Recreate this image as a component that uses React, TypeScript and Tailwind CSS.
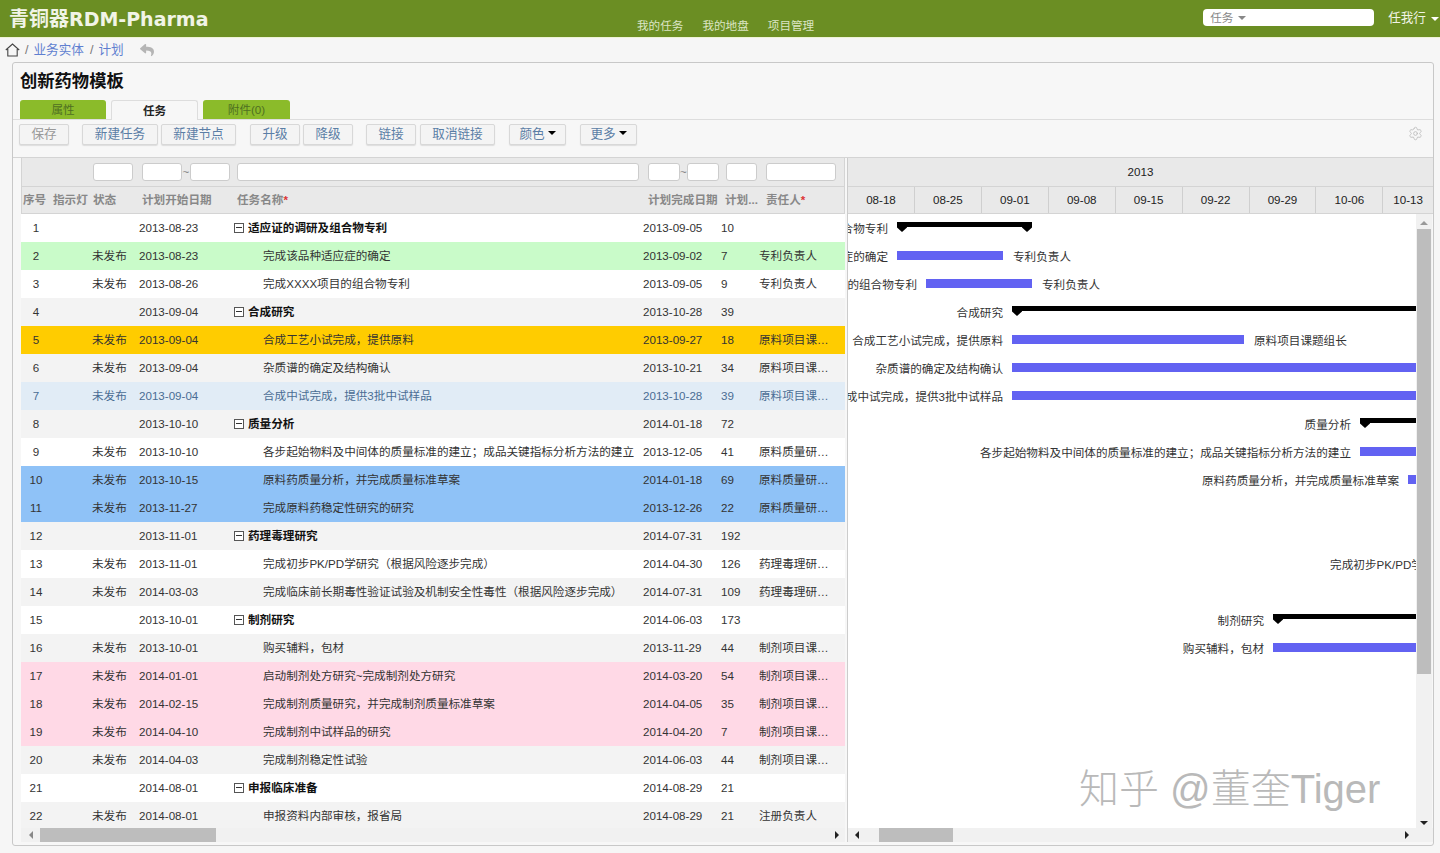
import { ChevronDown, Settings } from "lucide-react";
import { FaReply } from "react-icons/fa";

type Row = {
    no: number;
    status?: string;
    start: string;
    name: string;
    end: string;
    days: number;
    owner?: string;
    group?: boolean;
    bg: string;
    text?: string;
};

const rows: Row[] = [
    { no: 1, start: "2013-08-23", name: "适应证的调研及组合物专利", end: "2013-09-05", days: 10, group: true, bg: "bg-white" },
    { no: 2, status: "未发布", start: "2013-08-23", name: "完成该品种适应症的确定", end: "2013-09-02", days: 7, owner: "专利负责人", bg: "bg-[#c9fbc9]" },
    { no: 3, status: "未发布", start: "2013-08-26", name: "完成XXXX项目的组合物专利", end: "2013-09-05", days: 9, owner: "专利负责人", bg: "bg-white" },
    { no: 4, start: "2013-09-04", name: "合成研究", end: "2013-10-28", days: 39, group: true, bg: "bg-[#f3f3f3]" },
    { no: 5, status: "未发布", start: "2013-09-04", name: "合成工艺小试完成，提供原料", end: "2013-09-27", days: 18, owner: "原料项目课题组长", bg: "bg-[#ffcc00]" },
    { no: 6, status: "未发布", start: "2013-09-04", name: "杂质谱的确定及结构确认", end: "2013-10-21", days: 34, owner: "原料项目课题组长", bg: "bg-[#f3f3f3]" },
    { no: 7, status: "未发布", start: "2013-09-04", name: "合成中试完成，提供3批中试样品", end: "2013-10-28", days: 39, owner: "原料项目课题组长", bg: "bg-[#e1ecf6]", text: "text-[#4a6d94]" },
    { no: 8, start: "2013-10-10", name: "质量分析", end: "2014-01-18", days: 72, group: true, bg: "bg-[#f3f3f3]" },
    { no: 9, status: "未发布", start: "2013-10-10", name: "各步起始物料及中间体的质量标准的建立；成品关键指标分析方法的建立", end: "2013-12-05", days: 41, owner: "原料质量研究员", bg: "bg-white" },
    { no: 10, status: "未发布", start: "2013-10-15", name: "原料药质量分析，并完成质量标准草案", end: "2014-01-18", days: 69, owner: "原料质量研究员", bg: "bg-[#8fc2f7]" },
    { no: 11, status: "未发布", start: "2013-11-27", name: "完成原料药稳定性研究的研究", end: "2013-12-26", days: 22, owner: "原料质量研究员", bg: "bg-[#8fc2f7]" },
    { no: 12, start: "2013-11-01", name: "药理毒理研究", end: "2014-07-31", days: 192, group: true, bg: "bg-[#f3f3f3]" },
    { no: 13, status: "未发布", start: "2013-11-01", name: "完成初步PK/PD学研究（根据风险逐步完成）", end: "2014-04-30", days: 126, owner: "药理毒理研究员", bg: "bg-white" },
    { no: 14, status: "未发布", start: "2014-03-03", name: "完成临床前长期毒性验证试验及机制安全性毒性（根据风险逐步完成）", end: "2014-07-31", days: 109, owner: "药理毒理研究员", bg: "bg-[#f3f3f3]" },
    { no: 15, start: "2013-10-01", name: "制剂研究", end: "2014-06-03", days: 173, group: true, bg: "bg-white" },
    { no: 16, status: "未发布", start: "2013-10-01", name: "购买辅料，包材", end: "2013-11-29", days: 44, owner: "制剂项目课题组长", bg: "bg-[#f3f3f3]" },
    { no: 17, status: "未发布", start: "2014-01-01", name: "启动制剂处方研究~完成制剂处方研究", end: "2014-03-20", days: 54, owner: "制剂项目课题组长", bg: "bg-[#ffd9e6]" },
    { no: 18, status: "未发布", start: "2014-02-15", name: "完成制剂质量研究，并完成制剂质量标准草案", end: "2014-04-05", days: 35, owner: "制剂项目课题组长", bg: "bg-[#ffd9e6]" },
    { no: 19, status: "未发布", start: "2014-04-10", name: "完成制剂中试样品的研究", end: "2014-04-20", days: 7, owner: "制剂项目课题组长", bg: "bg-[#ffd9e6]" },
    { no: 20, status: "未发布", start: "2014-04-03", name: "完成制剂稳定性试验", end: "2014-06-03", days: 44, owner: "制剂项目课题组长", bg: "bg-[#f3f3f3]" },
    { no: 21, start: "2014-08-01", name: "申报临床准备", end: "2014-08-29", days: 21, group: true, bg: "bg-white" },
    { no: 22, status: "未发布", start: "2014-08-01", name: "申报资料内部审核，报省局", end: "2014-08-29", days: 21, owner: "注册负责人", bg: "bg-[#f3f3f3]" },
];

// x = bar start, w = bar width, in px from the left edge of the gantt body
const bars: Record<number, { x: number; w: number; owner?: string }> = {
    1: { x: 49, w: 135 },
    2: { x: 49, w: 106, owner: "专利负责人" },
    3: { x: 78, w: 106, owner: "专利负责人" },
    4: { x: 164, w: 500 },
    5: { x: 164, w: 232, owner: "原料项目课题组长" },
    6: { x: 164, w: 500 },
    7: { x: 164, w: 500 },
    8: { x: 512, w: 300 },
    9: { x: 512, w: 300 },
    10: { x: 560, w: 300 },
    13: { x: 723, w: 300 },
    15: { x: 425, w: 300 },
    16: { x: 425, w: 300 },
};

const weeks = ["08-18", "08-25", "09-01", "09-08", "09-15", "09-22", "09-29", "10-06", "10-13"];

const toolbar = [
    { label: "保存", w: "w-[50px]", ml: "ml-0", muted: true },
    { label: "新建任务", w: "w-[76px]", ml: "ml-[13px]" },
    { label: "新建节点", w: "w-[75px]", ml: "ml-[3px]" },
    { label: "升级", w: "w-[50px]", ml: "ml-[14px]" },
    { label: "降级", w: "w-[50px]", ml: "ml-[3px]" },
    { label: "链接", w: "w-[50px]", ml: "ml-[13px]" },
    { label: "取消链接", w: "w-[75px]", ml: "ml-[4px]" },
    { label: "颜色", w: "w-[57px]", ml: "ml-[14px]", caret: true },
    { label: "更多", w: "w-[57px]", ml: "ml-[14px]", caret: true },
];

function Caret({ className }: { className: string }) {
    return <span className={`inline-block border-x-[4px] border-t-[4px] border-x-transparent ${className}`} />;
}

function FilterInput({ className }: { className: string }) {
    return <div className={`h-[18px] shrink-0 rounded-[3px] border border-[#ccc] bg-white ${className}`} />;
}

function GanttRow({ row }: { row: Row }) {
    const bar = bars[row.no];
    if (!bar) return <div className="h-[28px]" />;
    return (
        <div className="relative h-[28px] overflow-hidden">
            <span
                className="absolute top-[6px] whitespace-nowrap text-[#333]"
                style={{ right: 568 - bar.x + 9 }}
            >
                {row.name}
            </span>
            {row.group ? (
                <div className="absolute top-[8px]" style={{ left: bar.x, width: bar.w }}>
                    <div className="h-[5px] bg-black" />
                    <div className="absolute left-0 top-0 h-[10px] w-[10px] bg-black [clip-path:polygon(0_0,100%_0,100%_55%,50%_100%,0_55%)]" />
                    <div className="absolute right-0 top-0 h-[10px] w-[10px] bg-black [clip-path:polygon(0_0,100%_0,100%_55%,50%_100%,0_55%)]" />
                </div>
            ) : (
                <div className="absolute top-[9px] h-[9px] bg-[#6262f2]" style={{ left: bar.x, width: bar.w }} />
            )}
            {bar.owner && (
                <span className="absolute top-[6px] whitespace-nowrap text-[#333]" style={{ left: bar.x + bar.w + 10 }}>
                    {bar.owner}
                </span>
            )}
        </div>
    );
}

export default function App() {
    return (
        <div className="relative flex h-[853px] w-[1440px] flex-col overflow-hidden bg-[#f6f6f6] font-['Liberation_Sans','Noto_Sans_CJK_SC',sans-serif] text-[11.6px] text-[#333]">
            {/* Top bar */}
            <header className="flex h-[38px] shrink-0 items-start border-b border-[#eef3d6] bg-[#6b8e23] pl-[9px]">
                <div className="mt-[6px] w-[628px] whitespace-nowrap font-['DejaVu_Sans','Noto_Sans_CJK_SC',sans-serif] text-[19px] font-bold leading-[26px] text-[#f1f4e6]">
                    <span className="text-[20px]">青铜器</span>RDM-Pharma
                </div>
                <nav className="mt-[18px] flex gap-[19px] text-[11.6px] leading-[16px] text-[#dbe5c4]">
                    <span>我的任务</span>
                    <span>我的地盘</span>
                    <span>项目管理</span>
                </nav>
                <div className="ml-[389px] mt-[9px] flex h-[17px] w-[171px] items-center gap-[5px] rounded-[4px] bg-white pl-[7px] text-[#888]">
                    任务
                    <Caret className="border-t-[#888]" />
                </div>
                <span className="ml-[14px] mt-[9px] text-[12.6px] leading-[18px] text-[#f1f4e6]">任我行</span>
                <Caret className="ml-[5px] mt-[17px] border-t-white" />
            </header>

            {/* Breadcrumb */}
            <div className="flex h-[24px] shrink-0 items-center pl-[5px] text-[12.6px]">
                <svg width="15" height="14" viewBox="0 0 15 14" fill="none" stroke="#444" strokeWidth="1.1">
                    <path d="M0.8 7 L7.5 1 L14.2 7 M2.8 6 V13 H12.2 V6" />
                </svg>
                <span className="ml-[5px] text-[#777]">/</span>
                <span className="ml-[5px] text-[#5f7fd0]">业务实体</span>
                <span className="ml-[6px] text-[#777]">/</span>
                <span className="ml-[5px] text-[#5f7fd0]">计划</span>
                <FaReply className="ml-[16px] text-[14px] text-[#b5b5b5]" />
            </div>

            {/* Panel */}
            <main className="ml-[12px] flex h-[784px] w-[1422px] flex-col rounded-[3px] border border-[#c8c8c8] bg-[#f7f7f7]">
                <h1 className="ml-[7px] mt-[5px] h-[32px] text-[17.3px] font-bold leading-[26px] text-[#111]">创新药物模板</h1>
                <div className="flex h-[20px] shrink-0 items-end gap-[5px] border-b border-[#ddd] pl-[7px]">
                    <div className="flex h-[19px] w-[86px] items-center justify-center rounded-t-[3px] bg-[#8bbb2a] text-[#4f6f22]">属性</div>
                    <div className="-mb-px flex h-[20px] w-[87px] items-center justify-center rounded-t-[3px] border border-b-0 border-[#ddd] bg-[#f7f7f7] font-bold text-[#222]">任务</div>
                    <div className="flex h-[19px] w-[87px] items-center justify-center rounded-t-[3px] bg-[#8bbb2a] text-[#4f6f22]">附件(0)</div>
                </div>

                {/* Toolbar */}
                <div className="flex h-[37px] shrink-0 items-start pl-[6px] pr-[10px] pt-[4px]">
                    {toolbar.map((b) => (
                        <button
                            key={b.label}
                            className={`flex h-[21px] items-center justify-center gap-[3px] rounded-[2px] border border-[#d8d8d8] bg-[#f4f4f4] text-[12.6px] shadow-[0_1px_1px_#ddd] ${b.w} ${b.ml} ${b.muted ? "text-[#999]" : "text-[#5b7ea6]"}`}
                        >
                            {b.label}
                            {b.caret && <Caret className="-mt-[3px] border-t-black" />}
                        </button>
                    ))}
                    <Settings className="ml-auto mt-[2px] h-[15px] w-[15px] text-[#bdbdbd]" strokeWidth={1.4} />
                </div>

                <div className="flex h-[685px] border-t border-[#d4d4d4] pl-[8px]">
                    {/* Task table */}
                    <section className="flex w-[824px] shrink-0 flex-col">
                        <div className="flex h-[28px] shrink-0 items-center border-l border-r border-[#d4d4d4] bg-[#e9e9e9] pl-[71px]">
                            <FilterInput className="w-[40px]" />
                            <FilterInput className="ml-[9px] w-[40px]" />
                            <span className="w-[8px] text-center text-[#888]">~</span>
                            <FilterInput className="w-[40px]" />
                            <FilterInput className="ml-[7px] w-[402px]" />
                            <FilterInput className="ml-[9px] w-[32px]" />
                            <span className="w-[7px] text-center text-[#888]">~</span>
                            <FilterInput className="w-[32px]" />
                            <FilterInput className="ml-[7px] w-[31px]" />
                            <FilterInput className="ml-[9px] w-[70px]" />
                        </div>
                        <div className="flex h-[28px] shrink-0 items-center whitespace-nowrap border-y border-l border-r border-[#d4d4d4] bg-[#e9e9e9] font-bold text-[#888]">
                            <span className="w-[30px] pl-[1px]">序号</span>
                            <span className="w-[41px] pl-[1px]">指示灯</span>
                            <span className="w-[49px]">状态</span>
                            <span className="w-[95px]">计划开始日期</span>
                            <span className="w-[411px]">任务名称<b className="text-[#d33]">*</b></span>
                            <span className="w-[77px]">计划完成日期</span>
                            <span className="w-[41px]">计划...</span>
                            <span>责任人<b className="text-[#d33]">*</b></span>
                        </div>
                        <div className="h-[615px] overflow-hidden">
                            {rows.map((r) => (
                                <div key={r.no} className={`flex h-[28px] items-center whitespace-nowrap ${r.bg} ${r.text ?? "text-[#333]"}`}>
                                    <span className="w-[30px] text-center">{r.no}</span>
                                    <span className="w-[37px]" />
                                    <span className="w-[47px] pl-[4px]">{r.status}</span>
                                    <span className="w-[94px] pl-[4px]">{r.start}</span>
                                    {r.group ? (
                                        <span className="flex w-[405px] items-center gap-[4px] pl-[5px] font-bold text-[#111]">
                                            <span className="flex h-[10px] w-[10px] items-center justify-center border border-[#555] bg-white">
                                                <span className="h-px w-[6px] bg-[#333]" />
                                            </span>
                                            {r.name}
                                        </span>
                                    ) : (
                                        <span className="w-[405px] overflow-hidden pl-[34px]">{r.name}</span>
                                    )}
                                    <span className="w-[83px] pl-[9px]">{r.end}</span>
                                    <span className="w-[37px] pl-[4px]">{r.days}</span>
                                    <span className="w-[90px] truncate pl-[5px] pr-[15px]">{r.owner}</span>
                                </div>
                            ))}
                        </div>
                        <div className="flex h-[14px] shrink-0 items-center bg-[#f1f1f1] pl-[6px]">
                            <Caret className="rotate-90 border-t-[#888]" />
                            <div className="ml-[5px] h-[14px] w-[176px] bg-[#bdbdbd]" />
                            <Caret className="ml-auto mr-[4px] -rotate-90 border-t-[#222]" />
                        </div>
                    </section>

                    {/* Gantt */}
                    <section className="ml-[2px] flex min-w-0 flex-1 flex-col border-l border-[#ccc]">
                        <div className="flex h-[28px] shrink-0 items-center justify-center bg-[#e9e9e9] text-[#222]">2013</div>
                        <div className="flex h-[28px] shrink-0 border-y border-[#d4d4d4] bg-[#e9e9e9] text-[#222]">
                            {weeks.map((w, i) => (
                                <span key={w} className={`flex h-full items-center justify-center border-r border-[#cfcfcf] ${i === 8 ? "w-[50px] border-r-0" : "w-[67.5px]"}`}>
                                    {w}
                                </span>
                            ))}
                        </div>
                        <div className="flex h-[615px]">
                            <div className="h-full w-[568px] overflow-hidden bg-white">
                                {rows.slice(0, 16).map((r) => (
                                    <GanttRow key={r.no} row={r} />
                                ))}
                            </div>
                            <div className="flex h-full w-[16px] flex-col items-center bg-[#f1f1f1]">
                                <Caret className="mt-[7px] rotate-180 border-t-[#999]" />
                                <div className="mt-[4px] h-[445px] w-[14px] bg-[#bdbdbd]" />
                                <Caret className="mb-[3px] mt-auto border-t-[#222]" />
                            </div>
                        </div>
                        <div className="flex h-[14px] shrink-0 items-center bg-[#f1f1f1] pl-[5px]">
                            <Caret className="rotate-90 border-t-[#222]" />
                            <div className="ml-[18px] h-[14px] w-[74px] bg-[#bdbdbd]" />
                            <Caret className="ml-auto mr-[22px] -rotate-90 border-t-[#222]" />
                        </div>
                    </section>
                </div>
            </main>

            {/* Watermark */}
            <span className="absolute left-[1079px] top-[762px] whitespace-nowrap text-[40px] font-light leading-[54px] text-[#b9b9b9]">
                知乎 @董奎Tiger
            </span>
        </div>
    );
}
